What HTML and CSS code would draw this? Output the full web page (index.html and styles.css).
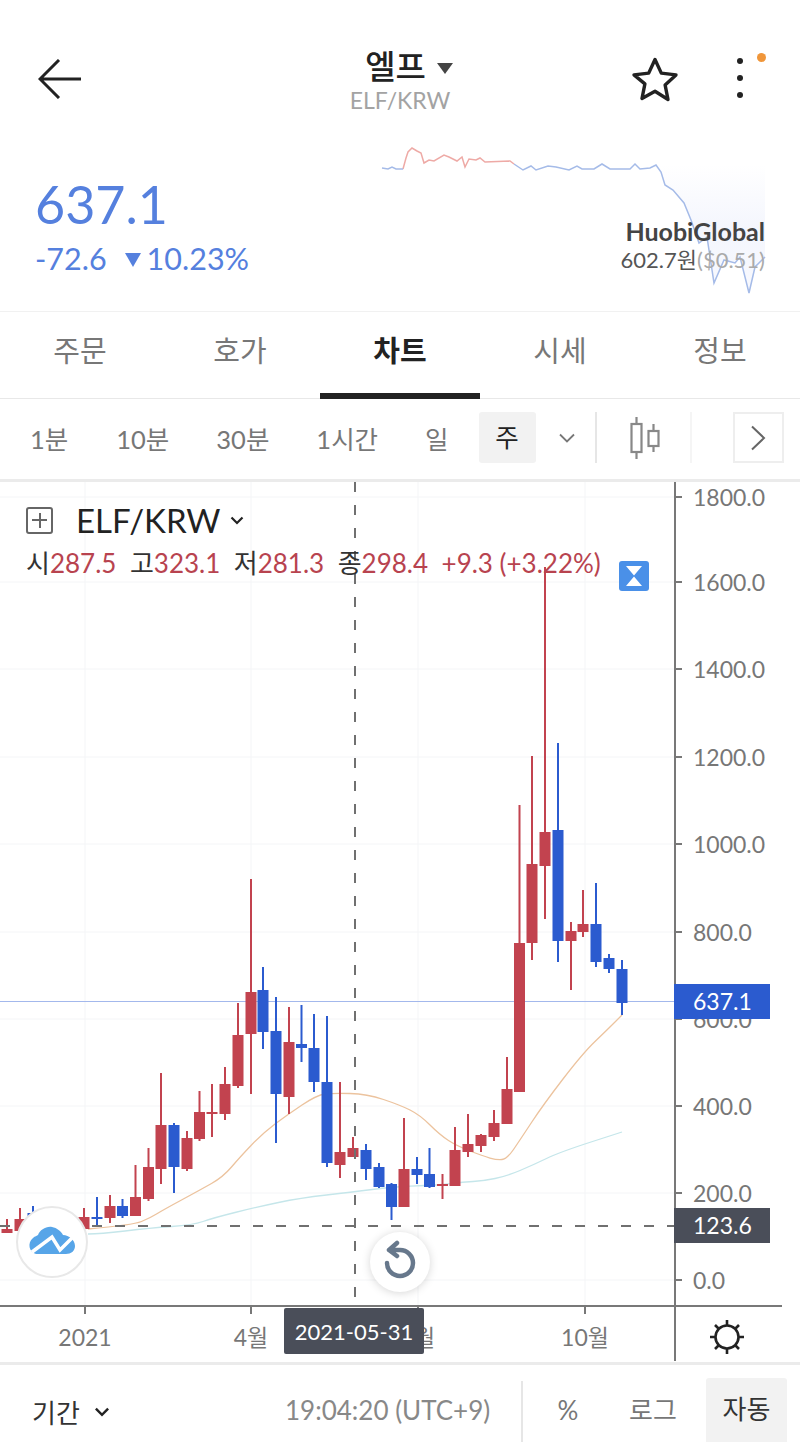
FILE: index.html
```html
<!DOCTYPE html>
<html lang="ko">
  <head>
    <meta charset="UTF-8" />
    <meta name="viewport" content="width=device-width, initial-scale=1.0" />
    <title>엘프 ELF/KRW</title>
    <link rel="stylesheet" href="styles.css">
  </head>
  <body>
    <header class="topbar">
      <div class="topbar-left">
        <svg class="icon-back" viewBox="0 0 44 40"><path d="M43 20H3M21 1L2 20l19 19" /></svg>
      </div>
      <div class="coin">
        <div class="coin-name">엘프<span class="caret"></span></div>
        <div class="coin-pair">ELF/KRW</div>
      </div>
      <div class="topbar-right">
        <svg class="icon-star" viewBox="0 0 48 46"><path d="M24 3.5l6.3 13.6 14.7 1.8-10.9 10 2.9 14.6L24 35.2l-13 7.3 2.9-14.6L3 18.900l14.700-1.800z" /></svg>
        <div class="more">
          <i></i><i></i><i></i>
          <b class="more-badge"></b>
        </div>
      </div>
    </header>

    <section class="quote">
      <div class="price-box">
        <div class="price">637.1</div>
        <div class="change">-72.6<span class="change-down"></span>10.23%</div>
      </div>
      <svg class="spark" viewBox="380 140 390 160">
        <defs>
          <linearGradient id="sparkfade" x1="0" x2="0" y1="0" y2="1">
            <stop offset="0" stop-color="#f4f6fd" stop-opacity="0" />
            <stop offset="0.5" stop-color="#f4f6fd" />
            <stop offset="1" stop-color="#f8f9fe" />
          </linearGradient>
        </defs>
        <path class="spark-fill" d="M656 165L661 172 665 185 673 190 684 203 691 220 699 243 707 237 714 283 724 260 735 263 740 257 749 293 755 267 765 257V165Z" />
        <path class="spark-up" d="M403 169L406 158 408 152 412 148 417 151 421 153 424 163 429 160 434 161 444 155 449 157 457 161 462 157 465 167 469 159 476 160 480 158 485 162 510 161 514 164" />
        <path class="spark-down" d="M382 168L388 169 392 167 396 169 403 169M514 164L523 170 531 166 536 170 548 166 556 167 569 170 577 166 582 169 594 169 602 164 610 169 630 169 635 164 640 169 650 168 656 165 661 172 665 185 673 190 684 203 691 220 699 243 707 237 714 283 724 260 735 263 740 257 749 293 755 267 765 257" />
      </svg>
      <div class="exchange">
        <div class="exchange-name">HuobiGlobal</div>
        <div class="exchange-price">602.7원<span>($0.51)</span></div>
      </div>
    </section>

    <nav class="tabs">
      <a>주문</a>
      <a>호가</a>
      <a class="active">차트</a>
      <a>시세</a>
      <a>정보</a>
    </nav>

    <div class="toolbar">
      <span class="tf tf-1">1분</span>
      <span class="tf tf-10">10분</span>
      <span class="tf tf-30">30분</span>
      <span class="tf tf-60">1시간</span>
      <span class="tf tf-d">일</span>
      <span class="tf tf-w">주</span>
      <svg class="chev-down" viewBox="0 0 18 10"><path d="M2 1.500l7 7 7-7" /></svg>
      <span class="sep"></span>
      <svg class="icon-candle" viewBox="0 0 30 42">
        <path d="M6.500 0v7M6.500 35v7M23.500 7v7M23.500 29v6" />
        <rect x="1.500" y="7" width="10" height="28" />
        <rect x="18.500" y="14" width="10" height="15" />
      </svg>
      <span class="sep sep-faint"></span>
      <span class="next-btn">
        <svg viewBox="0 0 16 26"><path d="M2 1.500L14 13 2 24.500" /></svg>
      </span>
    </div>

    <main class="chart">
      <svg id="plot" class="plot" viewBox="0 482 800 880"></svg>
      <div class="chart-head">
        <div class="symbol">
          <span class="plus-box"></span>
          <span class="symbol-name">ELF/KRW</span>
          <svg class="chev-small" viewBox="0 0 14 9"><path d="M1.500 1.500L7 7l5.500-5.500" /></svg>
        </div>
        <div class="ohlc">
          <span>시<em>287.5</em></span><span>고<em>323.1</em></span><span>저<em>281.3</em></span><span>종<em>298.4</em></span><em>+9.3 (+3.22%)</em>
        </div>
      </div>
      <svg class="hourglass" viewBox="0 0 30 30">
        <rect width="30" height="30" rx="3" />
        <path d="M7 5h16L15 14.500zM7 25h16L15 15.500z" />
      </svg>
    </main>

    <footer class="bottombar">
      <div class="period">기간
        <svg class="chev-small" viewBox="0 0 14 9"><path d="M1.500 1.500L7 7l5.500-5.500" /></svg>
      </div>
      <div class="clock">19:04:20 (UTC+9)</div>
      <div class="modes">
        <span class="mode mode-pct">%</span>
        <span class="mode mode-log">로그</span>
        <span class="mode mode-auto">자동</span>
      </div>
    </footer>

    <script src="chart.js"></script>
  </body>
</html>
```

FILE: styles.css
```css
/* styles.css */
* {
  box-sizing: border-box;
}

body {
  margin: 0;
  width: 800px;
  height: 1442px;
  overflow: hidden;
  background: #fff;
  color: #222;
  font-family: Lato, "Noto Sans CJK KR", sans-serif;
}

/* top bar */
.topbar {
  height: 130px;
  padding: 46px 38px 0;
  display: grid;
  grid-template-columns: 1fr auto 1fr;
  align-items: start;
}

.icon-back {
  display: block;
  width: 44px;
  height: 40px;
  margin-top: 13px;
  fill: none;
  stroke: #222;
  stroke-width: 3;
}

.coin {
  text-align: center;
}

.coin-name {
  font-size: 33px;
  line-height: 40px;
  font-weight: 500;
  margin-left: 18px;
}

.caret {
  display: inline-block;
  margin-left: 11px;
  vertical-align: 5px;
  border-left: 8px solid transparent;
  border-right: 8px solid transparent;
  border-top: 11px solid #444;
}

.coin-pair {
  font-size: 23px;
  line-height: 28px;
  color: #a3a3a3;
}

.topbar-right {
  display: flex;
  justify-content: flex-end;
  align-items: flex-start;
  padding-right: 19px;
}

.icon-star {
  width: 48px;
  height: 46px;
  margin-top: 10px;
  fill: none;
  stroke: #222;
  stroke-width: 3.4;
  stroke-linejoin: round;
}

.more {
  width: 6px;
  margin-left: 58px;
  margin-top: 12px;
  display: flex;
  flex-direction: column;
  gap: 11px;
  position: relative;
}

.more i {
  width: 6px;
  height: 6px;
  border-radius: 50%;
  background: #222;
}

.more-badge {
  position: absolute;
  left: 20px;
  top: -5px;
  width: 9px;
  height: 9px;
  border-radius: 50%;
  background: #f0963a;
}

/* price row */
.quote {
  height: 181px;
  position: relative;
  display: flex;
  justify-content: space-between;
  padding: 0 35px;
}

.price-box {
  color: #5580de;
  padding-top: 41px;
}

.price {
  font-size: 52px;
  line-height: 66px;
}

.change {
  font-size: 30.5px;
  line-height: 36px;
  margin-top: 3px;
}

.change-down {
  display: inline-block;
  margin: 0 6px 0 18px;
  vertical-align: 3px;
  border-left: 8px solid transparent;
  border-right: 8px solid transparent;
  border-top: 14px solid #5580de;
}

.spark {
  position: absolute;
  left: 380px;
  top: 10px;
  width: 390px;
  height: 160px;
  fill: none;
}

.spark-fill {
  fill: url(#sparkfade);
}

.spark-up {
  stroke: #eeaaa6;
  stroke-width: 1.5;
}

.spark-down {
  stroke: #a5bbe8;
  stroke-width: 1.5;
}

.exchange {
  position: absolute;
  right: 35px;
  top: 86px;
  text-align: right;
}

.exchange-name {
  font-size: 25px;
  line-height: 30px;
  font-weight: 700;
  color: #444;
}

.exchange-price {
  font-size: 22px;
  line-height: 28px;
  color: #555;
}

.exchange-price span {
  color: #aaa;
}

/* tabs */
.tabs {
  height: 88px;
  display: grid;
  grid-template-columns: repeat(5, 1fr);
  border-top: 1px solid #f1f1f1;
  border-bottom: 1px solid #e8e8e8;
}

.tabs a {
  font-size: 29px;
  line-height: 78px;
  text-align: center;
  color: #777;
}

.tabs a.active {
  color: #222;
  font-weight: 700;
  border-bottom: 6px solid #222;
  height: 87px;
}

/* timeframe row */
.toolbar {
  height: 83px;
  display: flex;
  align-items: center;
  padding: 0 15px 3px 30px;
  border-bottom: 3px solid #ebebeb;
  font-size: 25.5px;
  color: #777;
}

.toolbar > * {
  flex-shrink: 0;
}

.tf {
  white-space: nowrap;
}

.tf-1 { margin-right: 48px; }
.tf-10 { margin-right: 47px; }
.tf-30 { margin-right: 47px; }
.tf-60 { margin-right: 47px; }
.tf-d { margin-right: 30px; }

.tf-w {
  width: 57px;
  height: 51px;
  line-height: 51px;
  text-align: center;
  color: #222;
  background: #f2f2f2;
  border-radius: 3px;
}

.chev-down {
  width: 18px;
  height: 10px;
  margin-left: 22px;
  fill: none;
  stroke: #777;
  stroke-width: 1.8;
}

.sep {
  width: 2px;
  height: 51px;
  margin-left: 19px;
  background: #e6e6e6;
}

.sep-faint {
  margin-left: 30px;
  background: #f5f5f5;
}

.icon-candle {
  width: 30px;
  height: 42px;
  margin-left: 33px;
  fill: #fff;
  stroke: #888;
  stroke-width: 2.2;
}

.next-btn {
  width: 51px;
  height: 51px;
  margin-left: 41px;
  border: 2px solid #eee;
  display: flex;
  align-items: center;
  justify-content: center;
}

.next-btn svg {
  width: 16px;
  height: 26px;
  fill: none;
  stroke: #666;
  stroke-width: 2;
}

/* chart */
.chart {
  height: 880px;
  position: relative;
}

.plot {
  display: block;
  width: 800px;
  height: 880px;
}

.plot text {
  font-size: 23px;
  fill: #777;
}

.plot .tag-text {
  fill: #fff;
}

.plot .date-text {
  font-size: 22px;
  fill: #fff;
}

.grid {
  stroke: #f4f5f7;
  stroke-width: 1;
}

.axis {
  stroke: #787878;
  stroke-width: 2;
  fill: none;
}

.cross {
  stroke: #707070;
  stroke-width: 2;
  stroke-dasharray: 10 13;
}

.last-line {
  stroke: #a3b8ec;
  stroke-width: 1;
}

.ma-slow {
  fill: none;
  stroke: #ecc39e;
  stroke-width: 1.3;
}

.ma-long {
  fill: none;
  stroke: #c5e6ea;
  stroke-width: 1.3;
}

.wick-up { stroke: #c2434f; stroke-width: 2; }
.wick-down { stroke: #2b5bcf; stroke-width: 2; }
.body-up { fill: #c2434f; }
.body-down { fill: #2b5bcf; }

.tag-blue { fill: #2b5bcf; }
.tag-dark { fill: #4a4e59; }

.cloud-btn {
  fill: #fff;
  stroke: #e8e8e8;
  stroke-width: 2;
}

.cloud-shape { fill: #57a5e8; }

.cloud-zig {
  fill: none;
  stroke: #fff;
  stroke-width: 3.5;
}

.reset-btn {
  fill: #fff;
  filter: drop-shadow(0 1px 4px rgba(0, 0, 0, 0.16));
}

.reset-icon {
  fill: none;
  stroke: #67788c;
  stroke-width: 4.5;
  stroke-linecap: round;
  stroke-linejoin: round;
}

.sun {
  fill: none;
  stroke: #222;
  stroke-width: 2.6;
}

.chart-head {
  position: absolute;
  left: 26px;
  top: 18px;
}

.symbol {
  display: flex;
  align-items: center;
  height: 40px;
}

.plus-box {
  width: 27px;
  height: 27px;
  border: 2px solid #666;
  border-radius: 3px;
  background: linear-gradient(#666, #666) center / 15px 2px no-repeat,
    linear-gradient(#666, #666) center / 2px 15px no-repeat;
}

.symbol-name {
  font-size: 33px;
  margin-left: 23px;
  color: #222;
}

.chev-small {
  width: 14px;
  height: 9px;
  margin-left: 10px;
  fill: none;
  stroke: #222;
  stroke-width: 2.2;
}

.ohlc {
  display: flex;
  gap: 13.5px;
  font-size: 26px;
  line-height: 30px;
  margin-top: 8px;
  color: #333;
  white-space: nowrap;
}

.ohlc em {
  font-style: normal;
  color: #b8434f;
}

.hourglass {
  position: absolute;
  left: 619px;
  top: 79px;
  width: 30px;
  height: 30px;
  fill: #fff;
}

.hourglass rect {
  fill: #4a90e8;
}

/* bottom bar */
.bottombar {
  height: 80px;
  border-top: 3px solid #ebebeb;
  display: flex;
  align-items: stretch;
  padding: 16px 13px 0 32px;
  font-size: 26px;
}

.period {
  display: flex;
  align-items: center;
  color: #333;
  width: 253px;
}

.period .chev-small {
  width: 16px;
  height: 10px;
  margin-left: 14px;
}

.clock {
  line-height: 59px;
  width: 236px;
  color: #888;
  white-space: nowrap;
}

.modes {
  display: flex;
  border-left: 2px solid #e6e6e6;
}

.mode {
  line-height: 59px;
  text-align: center;
  color: #777;
}

.mode-pct { width: 90px; }
.mode-log { width: 80px; margin-right: 13px; }

.mode-auto {
  width: 81px;
  margin-top: -3px;
  line-height: 62px;
  color: #333;
  background: #f2f2f2;
  border-radius: 3px 3px 0 0;
}
```

FILE: chart.js
```js
// x, wick top, wick bottom, body top, body bottom, 1 = up / 0 = down
var candles = [
  [7, 1219, 1233, 1229, 1233, 1], [20, 1208, 1231, 1219, 1231, 1], [33, 1206, 1225, 1213, 1222, 0],
  [84, 1208, 1230, 1217, 1229, 1], [97, 1197, 1225, 1217, 1218, 0], [110, 1195, 1223, 1206, 1218, 1],
  [122.5, 1199, 1218, 1206, 1216, 0], [135.5, 1165, 1216, 1197, 1216, 1], [148.5, 1148, 1201, 1167, 1199, 1],
  [161, 1073, 1184, 1125, 1169, 1], [174, 1123, 1193, 1125, 1167, 0], [187, 1131, 1171, 1138, 1169, 1],
  [199.5, 1091, 1141, 1112, 1139, 1], [212, 1084, 1137, 1112, 1114, 1], [225, 1067, 1120, 1084, 1114, 1],
  [238, 1003, 1088, 1035, 1086, 1], [251, 879, 1094, 992, 1034, 1], [263, 967, 1049, 990, 1032, 0],
  [276, 997, 1143, 1031, 1094, 0], [289, 1007, 1114, 1042, 1097, 1], [301.5, 1005, 1062, 1044, 1048, 0],
  [314, 1014, 1092, 1048, 1082, 0], [327, 1016, 1167, 1082, 1163, 0], [340, 1082, 1178, 1152, 1165, 1],
  [353, 1137, 1157, 1148, 1157, 1], [366, 1144, 1180, 1150, 1169, 0], [379, 1163, 1188, 1167, 1187, 0],
  [391.5, 1183, 1220, 1184, 1207, 0], [404, 1118, 1207, 1169, 1207, 1], [417, 1157, 1184, 1169, 1175, 0],
  [429.5, 1148, 1188, 1174, 1187, 0], [442.5, 1174, 1199, 1184, 1186, 1], [455, 1127, 1186, 1150, 1186, 1],
  [468, 1114, 1157, 1144, 1152, 1], [481, 1134, 1152, 1135, 1146, 1], [494, 1110, 1141, 1123, 1137, 1],
  [507, 1057, 1124, 1089, 1124, 1], [519.5, 805, 1092, 943, 1092, 1], [532, 756, 960, 864, 943, 1],
  [545, 567, 919, 832, 866, 1], [558, 743, 962, 830, 941, 0], [571, 922, 990, 931, 941, 1],
  [583, 890, 937, 924, 932, 1], [596, 883, 967, 924, 962, 0], [609, 954, 973, 958, 969, 0],
  [622, 960, 1015, 969, 1003, 0]
];

var maSlow = [[88, 1229], [133, 1225], [150, 1218], [163, 1210], [200, 1190], [223, 1177], [240, 1157], [263, 1133], [287, 1115], [317, 1095], [333, 1093], [367, 1094], [400, 1105], [420, 1115], [440, 1135], [457, 1146], [483, 1156], [497, 1160], [507, 1159], [520, 1140], [543, 1105], [583, 1053], [607, 1030], [622, 1015]];
var maLong = [[88, 1234], [100, 1234], [150, 1228], [193, 1225], [213, 1218], [257, 1207], [300, 1198], [353, 1192], [383, 1188], [410, 1186], [440, 1185], [463, 1182], [483, 1181], [507, 1176], [533, 1165], [560, 1152], [622, 1132]];

var ticks = [
  [497, "1800.0"], [582, "1600.0"], [669, "1400.0"], [757, "1200.0"], [844, "1000.0"],
  [932, "800.0"], [1019, "600.0"], [1106, "400.0"], [1193, "200.0"], [1280, "0.0"]
];
var months = [[85, "2021"], [251, "4월"], [418, "7월"], [585, "10월"]];

// rounds the corners of a polyline through the segment midpoints
function smooth(pts) {
  var d = "M" + pts[0].join(" ");
  for (var i = 1; i < pts.length - 1; i++) {
    var mx = (pts[i][0] + pts[i + 1][0]) / 2;
    var my = (pts[i][1] + pts[i + 1][1]) / 2;
    d += "Q" + pts[i].join(" ") + " " + mx + " " + my;
  }
  return d + "L" + pts[pts.length - 1].join(" ");
}

var out = "";

ticks.forEach(function (t) {
  out += '<line class="grid" x1="0" x2="674" y1="' + t[0] + '" y2="' + t[0] + '"/>';
});
months.forEach(function (m) {
  out += '<line class="grid" x1="' + m[0] + '" x2="' + m[0] + '" y1="482" y2="1306"/>';
});

out += '<path class="ma-slow" d="' + smooth(maSlow) + '"/>';
out += '<path class="ma-long" d="' + smooth(maLong) + '"/>';
out += '<line class="last-line" x1="0" x2="674" y1="1001.500" y2="1001.500"/>';

candles.forEach(function (c) {
  var side = c[5] ? "up" : "down";
  out += '<line class="wick-' + side + '" x1="' + c[0] + '" x2="' + c[0] + '" y1="' + c[1] + '" y2="' + c[2] + '"/>';
  out += '<rect class="body-' + side + '" x="' + (c[0] - 5.5) + '" y="' + c[3] + '" width="11" height="' + Math.max(c[4] - c[3], 2) + '"/>';
});

// axes and labels
out += '<path class="axis" d="M675 482V1361M0 1306H782"/>';
ticks.forEach(function (t) {
  out += '<path class="axis" d="M675 ' + t[0] + 'H682"/>';
  out += '<text x="693" y="' + (t[0] + 9) + '">' + t[1] + "</text>";
});
months.forEach(function (m) {
  out += '<path class="axis" d="M' + m[0] + ' 1306V1314"/>';
  out += '<text x="' + m[0] + '" y="1346" text-anchor="middle">' + m[1] + "</text>";
});

// crosshair
out += '<line class="cross" x1="355" x2="355" y1="482" y2="1320"/>';
out += '<line class="cross" x1="0" x2="674" y1="1226" y2="1226"/>';

// price tags
out += '<rect class="tag-blue" x="674" y="984" width="96" height="35"/>';
out += '<text class="tag-text" x="693" y="1010">637.1</text>';
out += '<rect class="tag-dark" x="674" y="1208" width="96" height="35"/>';
out += '<text class="tag-text" x="693" y="1234">123.6</text>';
out += '<rect class="tag-dark" x="284" y="1308" width="140" height="46" rx="2"/>';
out += '<text class="date-text" x="354" y="1340" text-anchor="middle">2021-05-31</text>';

// floating buttons
out += '<circle class="cloud-btn" cx="52" cy="1242" r="35"/>';
out += '<path class="cloud-shape" d="M36 1254C29 1252 27 1243 33 1238 35 1236 37 1236 38 1235 40 1230 46 1226 52 1227 57 1228 61 1231 63 1235 69 1235 75 1240 75 1246 75 1251 71 1254 66 1254Z"/>';
out += '<path class="cloud-zig" d="M32 1252L52 1237 60 1250 72 1238"/>';
out += '<circle class="reset-btn" cx="400" cy="1262" r="30"/>';
out += '<path class="reset-icon" d="M387 1263A13 13 0 1 0 400 1250H389M397 1243L389 1250 397 1256"/>';

// sun
out += '<g class="sun"><circle cx="727" cy="1337" r="11.500"/><path d="M727 1320v6M727 1348v6M710 1337h6M738 1337h6M715 1325l4 4M735 1345l4 4M739 1325l-4 4M719 1345l-4 4"/></g>';

document.getElementById("plot").innerHTML = out;
```
